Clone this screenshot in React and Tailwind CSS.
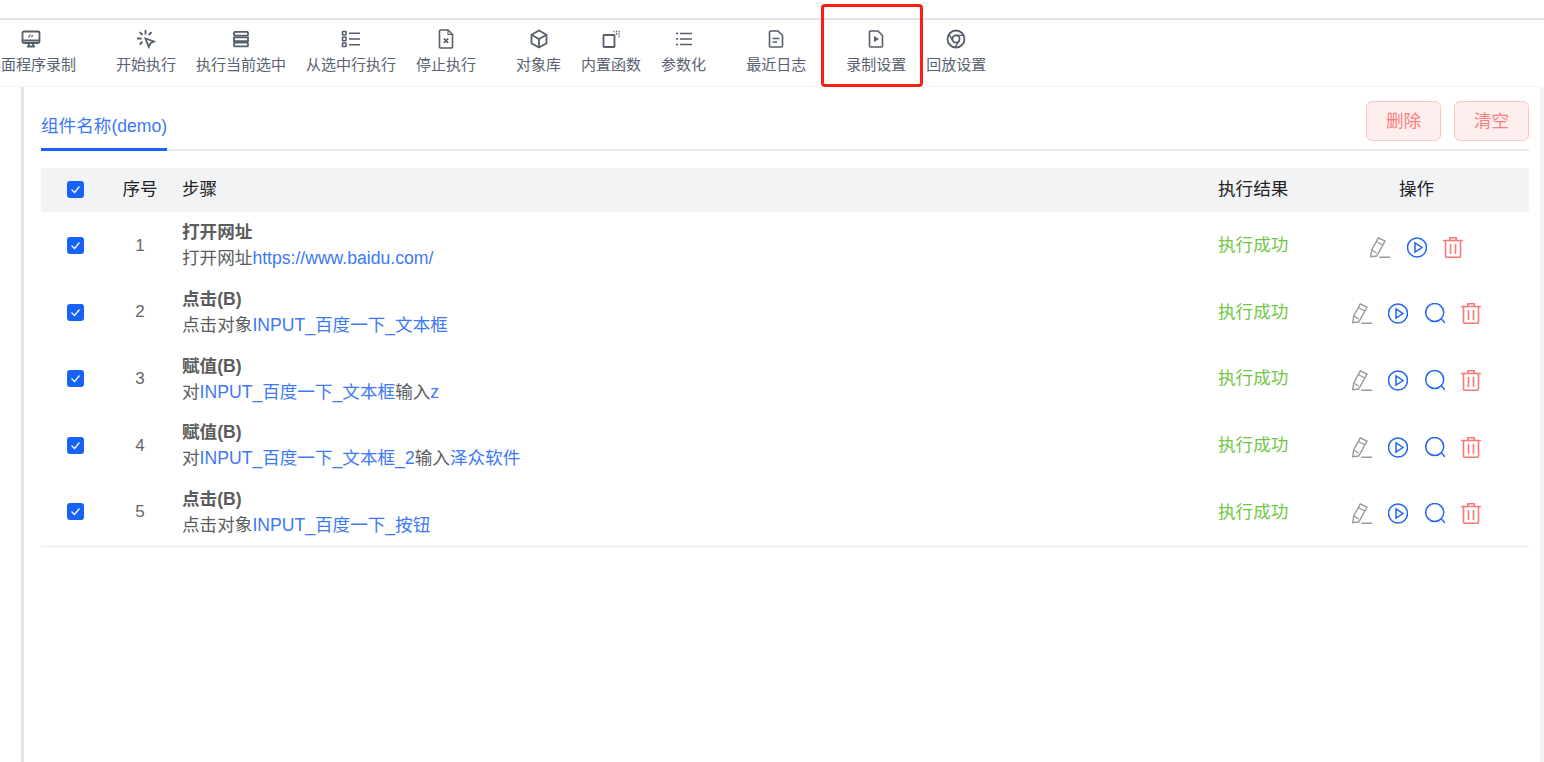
const font = { fontFamily: '"Liberation Sans", "Noto Sans CJK SC", sans-serif' };

const toolStroke = { fill: "none", stroke: "#565d6b", strokeWidth: 1.8 };

const MonitorIcon = () => (
  <svg width="20" height="20" viewBox="0 0 20 20" {...toolStroke}>
    <rect x="1.500" y="2.500" width="17" height="11.500" rx="1.500" />
    <path d="M1.500 11.500h17M6 17.500h8M8 14v3.500M12 14v3.500" />
    <path d="M7.500 8.500l2-3M10.500 8l1.200-2" strokeWidth="1.200" />
  </svg>
);
const ClickIcon = () => (
  <svg width="20" height="20" viewBox="0 0 20 20" {...toolStroke}>
    <path d="M9.500 9.500l8.500 3-3.500 1.700-1.700 3.800z" />
    <path d="M9.500 1v4.500M3.700 3.200l2.800 2.800M1 9.500h4.500M3.700 15.500l2.800-2.800M15.500 3.200l-2.800 2.800" />
  </svg>
);
const RowsIcon = () => (
  <svg width="20" height="20" viewBox="0 0 20 20" {...toolStroke}>
    <rect x="3" y="2.800" width="14" height="3.800" rx="1" />
    <path d="M3 8.300h14v3.800H3z" />
    <rect x="3" y="13.600" width="14" height="3.800" rx="1" />
  </svg>
);
const ListBoxIcon = () => (
  <svg width="20" height="20" viewBox="0 0 20 20" {...toolStroke} strokeWidth="1.600">
    <rect x="1.500" y="2.500" width="3.500" height="3.500" rx="0.500" />
    <rect x="1.500" y="8.200" width="3.500" height="3.500" rx="0.500" />
    <rect x="1.500" y="14" width="3.500" height="3.500" rx="0.500" />
    <path d="M8 4.200h11M8 10h11M8 15.800h11" />
  </svg>
);
const FileXIcon = () => (
  <svg width="20" height="20" viewBox="0 0 20 20" {...toolStroke} strokeWidth="1.600">
    <path d="M3.500 2a1 1 0 0 1 1-1h7.500l4.500 4.500V18a1 1 0 0 1-1 1h-11a1 1 0 0 1-1-1z" />
    <path d="M7.800 9.500l4.400 4.400M12.200 9.500l-4.400 4.400" />
    <path d="M12 1v4.500h4.500" strokeWidth="1.100" />
  </svg>
);
const BoxIcon = () => (
  <svg width="20" height="20" viewBox="0 0 20 20" {...toolStroke}>
    <path d="M10 1.500l7.500 4.200v8.600L10 18.500l-7.500-4.200V5.700z" />
    <path d="M2.500 5.700L10 10l7.500-4.300M10 10v8.500" />
  </svg>
);
const FunctionIcon = () => (
  <svg width="20" height="20" viewBox="0 0 20 20" {...toolStroke}>
    <rect x="2.500" y="6" width="11" height="12" rx="0.500" />
    <path d="M12.500 2.500h1.200M15 2.500h1.200M17.500 2.500h1.200M15 5h1.200M17.500 5h1.200M17.500 7.500h1.200" strokeWidth="1.300" />
  </svg>
);
const ListIcon = () => (
  <svg width="20" height="20" viewBox="0 0 20 20" {...toolStroke} strokeWidth="1.600">
    <path d="M2 4.500h2.200M6 4.500h12M2 10h2.200M6 10h12M2 15.500h2.200M6 15.500h12" />
  </svg>
);
const FileTextIcon = () => (
  <svg width="20" height="20" viewBox="0 0 20 20" {...toolStroke} strokeWidth="1.600">
    <path d="M3.500 3a1 1 0 0 1 1-1h7.500l4.500 4.500V17a1 1 0 0 1-1 1h-11a1 1 0 0 1-1-1z" />
    <path d="M6.500 9.500h7M6.500 13h4.500" />
  </svg>
);
const FilePlayIcon = () => (
  <svg width="20" height="20" viewBox="0 0 20 20" {...toolStroke} strokeWidth="1.600">
    <path d="M3.500 3a1 1 0 0 1 1-1h7.500l4.500 4.500V17a1 1 0 0 1-1 1h-11a1 1 0 0 1-1-1z" />
    <path d="M8 7l5 3-5 3z" fill="#565d6b" stroke="none" />
  </svg>
);
const ChromeIcon = () => (
  <svg width="20" height="20" viewBox="0 0 20 20" {...toolStroke}>
    <circle cx="10" cy="10" r="8.500" />
    <circle cx="10" cy="10" r="3.600" />
    <path d="M10 6.400h8M6.900 11.800L3 5.200M13.100 11.800L9 18.400" strokeWidth="1.400" />
  </svg>
);

const PencilIcon = () => (
  <svg width="20" height="21" viewBox="0 0 20 21" fill="none" stroke="#9a9a9a" strokeWidth="1.400">
    <path d="M8.300 0.800L15 4 6.700 19l-6 .7 1-6.700z" />
    <path d="M6.300 4.500l6.500 3.500M1.700 13l5 3" />
    <path d="M9.300 20.300H20" strokeWidth="1.600" />
  </svg>
);
const PlayIcon = () => (
  <svg width="20" height="21" viewBox="0 0 20 21" fill="none" stroke="#2266f2" strokeWidth="1.500">
    <circle cx="10" cy="10.500" r="9.500" />
    <path d="M8 5.800l7 4.700-7 4.700z" />
  </svg>
);
const SearchIcon = () => (
  <svg width="20" height="21" viewBox="0 0 20 21" fill="none" stroke="#2266f2" strokeWidth="1.500">
    <circle cx="9.700" cy="9.500" r="9" />
    <path d="M16.500 16l3.500 4" />
  </svg>
);
const TrashIcon = () => (
  <svg width="20" height="21" viewBox="0 0 20 21" fill="none" stroke="#f97878" strokeWidth="1.600">
    <path d="M0 3.500h20M2.500 3.500v15.500a1.200 1.200 0 0 0 1.200 1.200h12.600a1.200 1.200 0 0 0 1.200-1.200V3.500M6.800 3.500V.800h6.400v2.700M7.500 7v10M12.500 7v10" />
  </svg>
);

const tools = [
  { label: "桌面程序录制", icon: <MonitorIcon /> },
  { label: "开始执行", icon: <ClickIcon />, group: true },
  { label: "执行当前选中", icon: <RowsIcon /> },
  { label: "从选中行执行", icon: <ListBoxIcon /> },
  { label: "停止执行", icon: <FileXIcon /> },
  { label: "对象库", icon: <BoxIcon />, group: true },
  { label: "内置函数", icon: <FunctionIcon /> },
  { label: "参数化", icon: <ListIcon /> },
  { label: "最近日志", icon: <FileTextIcon />, group: true },
  { label: "录制设置", icon: <FilePlayIcon />, group: true },
  { label: "回放设置", icon: <ChromeIcon /> },
];

const Link = ({ children }) => <span className="text-[#3d78f6]">{children}</span>;

const steps = [
  { title: "打开网址", desc: <>打开网址<Link>https://www.baidu.com/</Link></>, noSearch: true },
  { title: "点击(B)", desc: <>点击对象<Link>INPUT_百度一下_文本框</Link></> },
  { title: "赋值(B)", desc: <>对<Link>INPUT_百度一下_文本框</Link>输入<Link>z</Link></> },
  { title: "赋值(B)", desc: <>对<Link>INPUT_百度一下_文本框_2</Link>输入<Link>泽众软件</Link></> },
  { title: "点击(B)", desc: <>点击对象<Link>INPUT_百度一下_按钮</Link></> },
];

const Check = () => (
  <span className="flex h-[17px] w-[17px] items-center justify-center rounded-[3px] bg-[#1763f5]">
    <svg width="11" height="11" viewBox="0 0 11 11" fill="none" stroke="#fff" strokeWidth="1.200">
      <path d="M1.500 5.500l3 3 5-6" />
    </svg>
  </span>
);

export default function App() {
  return (
    <div style={font} className="relative flex h-[762px] w-[1544px] flex-col overflow-hidden bg-white">
      <div className="box-content h-[18px] shrink-0 border-b-2 border-[#dfe3ec]" />
      <div className="flex h-[67px] shrink-0 overflow-hidden border-b border-[#f5f5f7] pt-[9px]">
        <div className="-ml-[14px] flex gap-5">
          {tools.map((tool) => (
            <div key={tool.label} className={`flex shrink-0 flex-col items-center ${tool.group ? "ml-5" : ""}`}>
              <div className="flex h-5 items-center justify-center">{tool.icon}</div>
              <span className="mt-1.5 text-[15px] leading-5 whitespace-nowrap text-[#5a6170]">{tool.label}</span>
            </div>
          ))}
        </div>
      </div>
      <div className="flex min-h-0 flex-1">
        <div className="ml-[21px] w-[3px] shrink-0 bg-[#e3e6f0]" />
        <div className="min-w-0 flex-1 pr-[11px] pl-[17px]">
          <div className="flex h-[64px] items-end justify-between border-b-2 border-[#e4e7ed]">
            <span className="-mb-0.5 border-b-[3px] border-[#1763f5] pb-2.5 text-[17.600px] leading-6 text-[#3d78f6]">组件名称(demo)</span>
            <div className="mb-2 flex gap-[13px]">
              <button className="h-10 w-[75px] rounded-md border border-[#fdc4c4] bg-[#ffeeee] text-[17.600px] text-[#f98080]">删除</button>
              <button className="h-10 w-[75px] rounded-md border border-[#fdc4c4] bg-[#ffeeee] text-[17.600px] text-[#f98080]">清空</button>
            </div>
          </div>
          <div className="mt-[17px] flex h-[44.200px] items-center bg-[#f2f3f5] pb-0.5 text-[17.600px] text-[#222]">
            <div className="flex w-[69px] justify-center"><Check /></div>
            <div className="w-[60px] text-center">序号</div>
            <div className="ml-3 flex-1">步骤</div>
            <div className="w-[86px]">执行结果</div>
            <div className="w-[225px] text-center">操作</div>
          </div>
          <div className="border-b border-[#e9ebef] pb-px">
            {steps.map((step, i) => (
              <div key={i} className="flex h-[66.600px] items-center">
                <div className="flex w-[69px] justify-center"><Check /></div>
                <div className="w-[60px] text-center text-[17px] text-[#666]">{i + 1}</div>
                <div className="ml-3 flex-1 text-[17.600px] leading-[26px] text-[#5c5c5c]">
                  <div className="font-bold">{step.title}</div>
                  <div>{step.desc}</div>
                </div>
                <div className="w-[86px] text-[17.600px] text-[#72c746]">执行成功</div>
                <div className="flex w-[225px] items-center justify-center gap-[16.500px] pt-[3.500px]">
                  <PencilIcon />
                  <PlayIcon />
                  {!step.noSearch && <SearchIcon />}
                  <TrashIcon />
                </div>
              </div>
            ))}
          </div>
        </div>
        <div className="w-1 shrink-0 bg-[#f3f4f6]" />
      </div>
      <div className="pointer-events-none absolute top-1 left-[821px] h-[83px] w-[102px] rounded-[4px] border-[3px] border-[#fb1e14]" />
    </div>
  );
}
